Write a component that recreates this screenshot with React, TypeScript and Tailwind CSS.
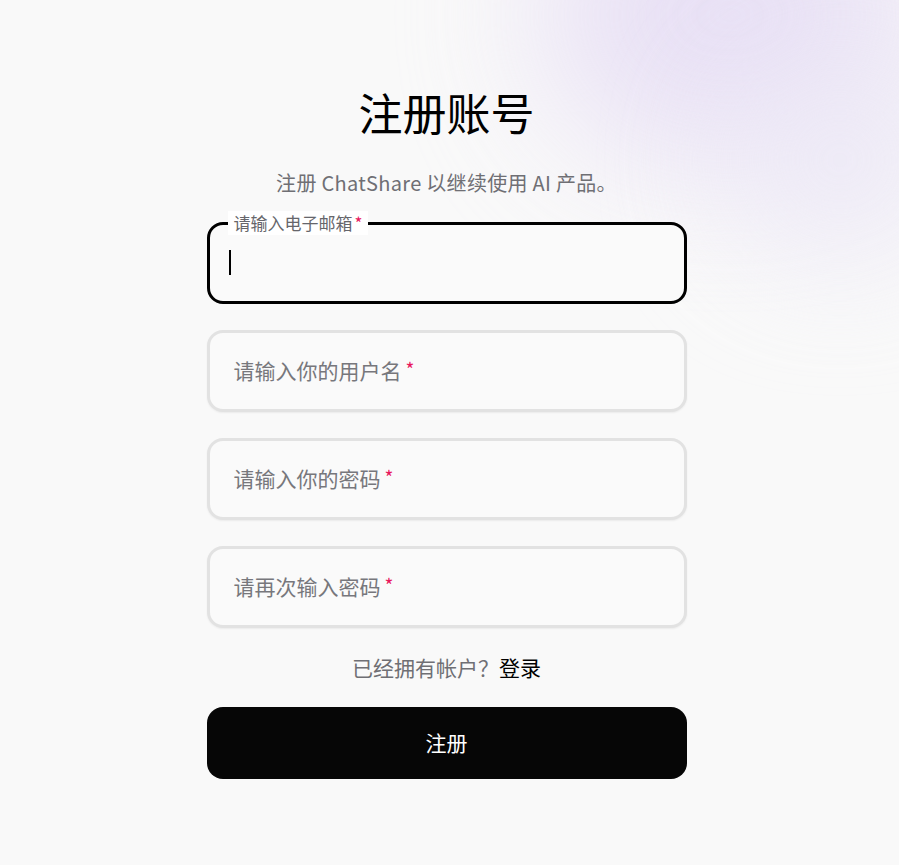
import React from 'react';

const sans = { fontFamily: '"Noto Sans CJK SC", "Noto Sans", sans-serif' };

function Field({ label }: { label: string }) {
  return (
    <div className="relative h-[82px] rounded-[16px] border-[3px] border-[#e2e2e2] bg-[#fafafa] shadow-[0_1px_2px_rgba(0,0,0,0.06)]">
      <span className="pointer-events-none absolute left-[24px] top-1/2 -translate-y-1/2 text-[21px] text-[#77777c]">
        {label}
        <span className="relative -top-[2px] ml-[4px] text-[19px] text-[#e8175d]">*</span>
      </span>
    </div>
  );
}

export default function App() {
  return (
    <div className="relative min-h-[865px] overflow-hidden bg-[#f9f9f9]" style={sans}>
      <div className="pointer-events-none absolute -top-[130px] left-[540px] h-[290px] w-[380px] rounded-full bg-[#e4daf4] opacity-80 blur-[70px]" />
      <div className="pointer-events-none absolute top-[50px] left-[720px] h-[220px] w-[240px] rounded-full bg-[#ece8f6] opacity-70 blur-[60px]" />

      <div className="relative mx-auto flex w-[480px] -translate-x-[3px] flex-col pt-[88px]">
        <h1
          className="text-center text-[44px] leading-[58px] font-normal text-black"
          style={{ fontFamily: '"Liberation Serif", "Noto Sans CJK SC", serif' }}
        >
          注册账号
        </h1>
        <p className="mt-[23px] text-center text-[20px] leading-[28px] tracking-[0.3px] text-[#6f6f74]">
          注册 ChatShare 以继续使用 AI 产品。
        </p>

        <div className="mt-[25px] flex flex-col gap-[26px]">
          <div className="relative h-[82px] rounded-[16px] border-[3px] border-black bg-[#fafafa]">
            <span className="absolute -top-[14px] left-[18px] bg-white px-[6px] text-[17px] leading-[24px] text-[#66666b]">
              请输入电子邮箱
              <span className="ml-[2px] text-[#e8175d]">*</span>
            </span>
            <span className="absolute left-[19px] top-[25px] h-[25px] w-[2px] bg-black" />
          </div>
          <Field label="请输入你的用户名" />
          <Field label="请输入你的密码" />
          <Field label="请再次输入密码" />
        </div>

        <p className="mt-[24px] text-center text-[21px] leading-[30px] text-[#6f6f74]">
          已经拥有帐户？<span className="text-black">登录</span>
        </p>

        <button className="mt-[25px] h-[72px] w-full rounded-[16px] bg-[#060606] text-[21px] text-white">
          注册
        </button>
      </div>
    </div>
  );
}
